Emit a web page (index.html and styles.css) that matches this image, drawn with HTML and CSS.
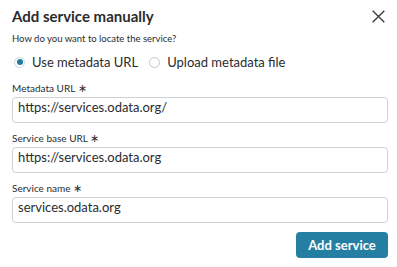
FILE: index.html
```html
<!DOCTYPE html>
<html lang="en">
<head>
    <meta charset="UTF-8">
    <title>Add service manually</title>
    <link rel="stylesheet" href="styles.css">
</head>
<body>
    <div class="dialog">
        <div class="header">
            <h1>Add service manually</h1>
            <button class="close" aria-label="Close">
                <svg width="13" height="13" viewBox="0 0 13 13"><path d="M0.7 0.7L12.3 12.3M12.3 0.7L0.7 12.3" stroke="#3a3f44" stroke-width="1.4" fill="none"/></svg>
            </button>
        </div>
        <p class="question">How do you want to locate the service?</p>
        <div class="radios">
            <label class="radio"><span class="dot checked"></span>Use metadata URL</label>
            <label class="radio"><span class="dot"></span>Upload metadata file</label>
        </div>
        <div class="field first">
            <label>Metadata URL <span class="req">∗</span></label>
            <div class="input">https://services.odata.org/</div>
        </div>
        <div class="field">
            <label>Service base URL <span class="req">∗</span></label>
            <div class="input">https://services.odata.org</div>
        </div>
        <div class="field">
            <label>Service name <span class="req">∗</span></label>
            <div class="input">services.odata.org</div>
        </div>
        <div class="footer">
            <button class="primary">Add service</button>
        </div>
    </div>
</body>
</html>
```
FILE: styles.css
```css
body {
    margin: 0;
    background: #fff;
    font-family: Lato, "Liberation Sans", sans-serif;
    color: #2a2c2e;
}
.dialog {
    padding: 7px 9px 0 12px;
}
.header {
    display: flex;
    justify-content: space-between;
    align-items: center;
    height: 18px;
}
h1 {
    margin: 0;
    font-size: 15px;
    line-height: 18px;
    font-weight: 700;
}
.close {
    background: none;
    border: 0;
    padding: 0;
    margin-right: 3px;
    display: flex;
}
.question {
    margin: 8px 0 0;
    font-size: 9.5px;
    line-height: 12px;
}
.radios {
    display: flex;
    gap: 11px;
    margin-top: 9px;
    margin-left: 2px;
}
.radio {
    display: flex;
    align-items: center;
    gap: 7px;
    font-size: 13px;
    line-height: 16px;
}
.dot {
    width: 9px;
    height: 9px;
    border: 1px solid #c4c6c8;
    border-radius: 50%;
    position: relative;
}
.dot.checked {
    border-color: #c3d7e2;
}
.dot.checked::after {
    content: "";
    position: absolute;
    left: 1.5px;
    top: 1.5px;
    width: 6px;
    height: 6px;
    border-radius: 50%;
    background: #237a9e;
}
.field {
    margin-top: 9px;
}
.field.first {
    margin-top: 12px;
}
.field label {
    display: block;
    font-size: 10px;
    line-height: 12px;
    margin-bottom: 3px;
}
.req {
    font-size: 11px;
}
.input {
    height: 18px;
    border: 1px solid #cfd1d3;
    border-radius: 4px;
    padding: 0 5px 6px;
    font-size: 13px;
    line-height: 18px;
}
.footer {
    display: flex;
    justify-content: flex-end;
    margin-top: 9px;
}
.primary {
    background: #247fa3;
    color: #fff;
    border: 0;
    border-radius: 4px;
    font-family: Lato, sans-serif;
    font-weight: 700;
    font-size: 13px;
    height: 26px;
    width: 92px;
    padding: 0;
}
```
